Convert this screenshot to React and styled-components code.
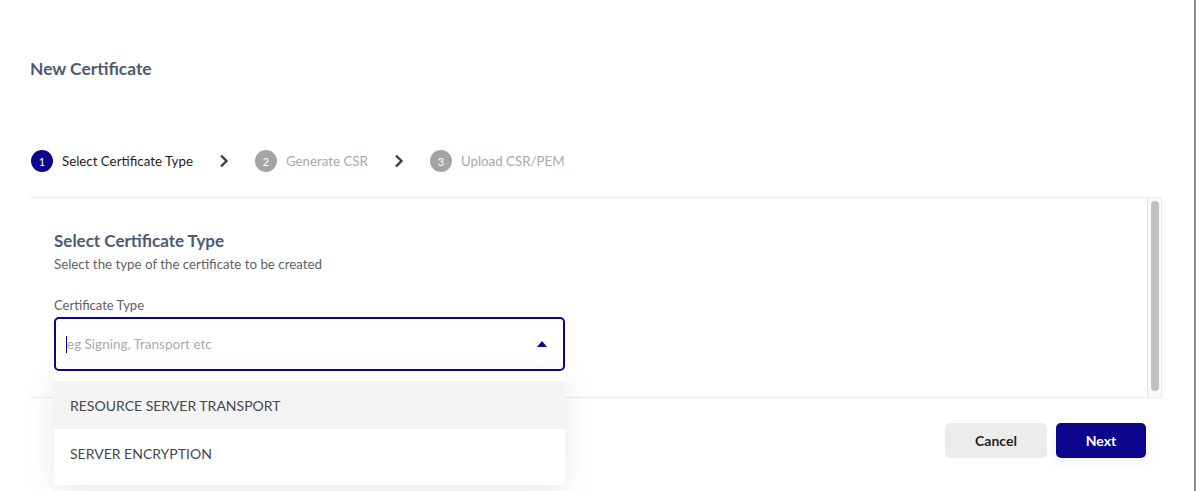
import React from "react";
import styled, { createGlobalStyle } from "styled-components";

const GlobalStyle = createGlobalStyle`
  html, body { margin: 0; padding: 0; background: #ffffff; }
  body { font-family: Lato, "Noto Sans", sans-serif; }
  * { box-sizing: border-box; }
`;

const NAVY = "#0d068c";

const Page = styled.div`
  position: relative;
  width: 1196px;
  height: 491px;
  overflow: hidden;
  background: #fff;
  border-right: 2px solid #8e8e8e;
  padding: 57px 32px 0 30px;
`;

const Title = styled.h1`
  margin: 0;
  font-size: 17.4px;
  line-height: 24px;
  font-weight: 700;
  color: #4b5b70;
`;

const Stepper = styled.ol`
  list-style: none;
  margin: 69px 0 0;
  padding: 0 0 0 1px;
  display: flex;
  align-items: center;
  gap: 26px;
  height: 22px;
`;

const Step = styled.li`
  display: flex;
  align-items: center;
  gap: 9px;
`;

const StepNum = styled.span`
  width: 22px;
  height: 22px;
  border-radius: 50%;
  background: ${(p) => (p.$active ? NAVY : "#a4a4a4")};
  color: #fff;
  font-size: 11px;
  display: flex;
  align-items: center;
  justify-content: center;
`;

const StepLabel = styled.span`
  font-size: 13.3px;
  color: ${(p) => (p.$active ? "#1e1e1e" : "#a9a9a9")};
`;

const Chevron = styled.svg`
  width: 10px;
  height: 14px;
  display: block;
`;

const ScrollBox = styled.section`
  margin-top: 25px;
  height: 201px;
  display: flex;
  border-top: 1px solid #ebebeb;
  border-bottom: 1px solid #ebebeb;
  border-right: 1px solid #ebebeb;
  overflow: hidden;
`;

const Content = styled.div`
  flex: 1;
  padding: 31px 24px 0 24px;
`;

const ScrollTrack = styled.div`
  width: 14px;
  display: flex;
  flex-direction: column;
  background: #fafafa;
  border-left: 1px solid #e6e6e6;
  padding: 3px 2px 6px 3px;
`;

const ScrollThumb = styled.div`
  flex: 1;
  background: #c1c1c1;
  border-radius: 4px;
`;

const Heading = styled.h2`
  margin: 0;
  font-size: 17px;
  line-height: 24px;
  font-weight: 700;
  color: #4b5b70;
`;

const SubText = styled.p`
  margin: 2px 0 0;
  font-size: 13.3px;
  line-height: 18px;
  color: #5f5f5f;
`;

const FieldLabel = styled.label`
  display: block;
  margin-top: 23px;
  font-size: 13px;
  line-height: 18px;
  color: #606060;
`;

const InputWrap = styled.div`
  margin-top: 3px;
  width: 511px;
  height: 54px;
  border: 2px solid ${NAVY};
  border-radius: 5px;
  display: flex;
  align-items: center;
  padding: 0 16px 0 10px;
`;

const Input = styled.input`
  flex: 1;
  border: none;
  outline: none;
  background: transparent;
  font-family: inherit;
  font-size: 13.5px;
  color: #333;
  caret-color: ${NAVY};
  padding: 0;
  border-left: 1px solid ${NAVY};
  height: 17px;
  &::placeholder { color: #ababab; }
`;

const Triangle = styled.svg`
  width: 10px;
  height: 6px;
  display: block;
`;

const Footer = styled.div`
  margin-top: 25px;
  display: flex;
  justify-content: flex-end;
  gap: 9px;
  padding-right: 16px;
`;

const Button = styled.button`
  height: 35px;
  border: none;
  border-radius: 5px;
  font-family: inherit;
  font-size: 14px;
  font-weight: 700;
  background: ${(p) => (p.$primary ? NAVY : "#ececec")};
  color: ${(p) => (p.$primary ? "#ffffff" : "#1f2426")};
  width: ${(p) => (p.$primary ? "90px" : "102px")};
  box-shadow: ${(p) => (p.$primary ? "0 4px 14px rgba(0,0,0,0.06)" : "none")};
`;

const Menu = styled.ul`
  position: absolute;
  left: 54px;
  top: 371px;
  width: 511px;
  margin: 0;
  padding: 10px 0 8px;
  list-style: none;
  background: #fff;
  box-shadow: 0 6px 30px rgba(0, 0, 0, 0.09);
`;

const MenuItem = styled.li`
  height: 48px;
  display: flex;
  align-items: center;
  padding: 0 16px;
  font-size: 14px;
  color: #45474f;
  background: ${(p) => (p.$hover ? "#f4f4f4" : "#fff")};
`;

const steps = [
  { n: 1, label: "Select Certificate Type", active: true },
  { n: 2, label: "Generate CSR" },
  { n: 3, label: "Upload CSR/PEM" },
];

const ChevronIcon = () => (
  <Chevron viewBox="0 0 10 14" aria-hidden="true">
    <path d="M2 1.5 L7.5 7 L2 12.5" fill="none" stroke="#3d3d3d" strokeWidth="2.4" />
  </Chevron>
);

export default function App() {
  return (
    <>
      <GlobalStyle />
      <Page>
        <Title>New Certificate</Title>
        <Stepper>
          {steps.map((s, i) => (
            <React.Fragment key={s.n}>
              {i > 0 && <ChevronIcon />}
              <Step>
                <StepNum $active={s.active}>{s.n}</StepNum>
                <StepLabel $active={s.active}>{s.label}</StepLabel>
              </Step>
            </React.Fragment>
          ))}
        </Stepper>
        <ScrollBox>
          <Content>
            <Heading>Select Certificate Type</Heading>
            <SubText>Select the type of the certificate to be created</SubText>
            <FieldLabel htmlFor="ctype">Certificate Type</FieldLabel>
            <InputWrap>
              <Input id="ctype" placeholder="eg Signing, Transport etc" readOnly />
              <Triangle viewBox="0 0 10 6" aria-hidden="true">
                <path d="M0 6 L5 0 L10 6 Z" fill={NAVY} />
              </Triangle>
            </InputWrap>
          </Content>
          <ScrollTrack>
            <ScrollThumb />
          </ScrollTrack>
        </ScrollBox>
        <Footer>
          <Button>Cancel</Button>
          <Button $primary>Next</Button>
        </Footer>
        <Menu>
          <MenuItem $hover>RESOURCE SERVER TRANSPORT</MenuItem>
          <MenuItem>SERVER ENCRYPTION</MenuItem>
        </Menu>
      </Page>
    </>
  );
}
